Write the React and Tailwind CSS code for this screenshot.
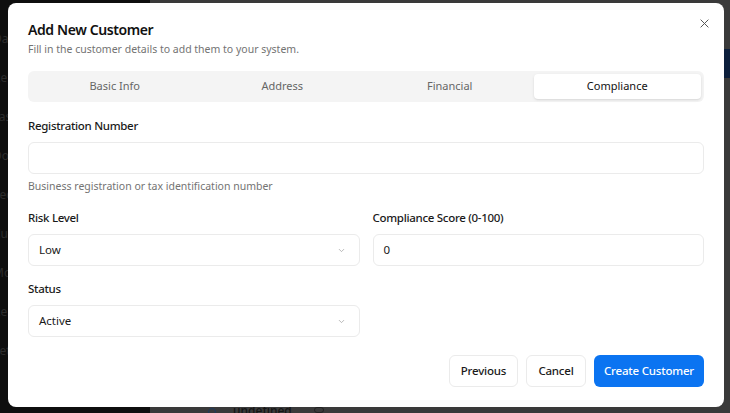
import React from 'react';

const cls = (...a) => a.filter(Boolean).join(' ');

const tabs = ['Basic Info', 'Address', 'Financial', 'Compliance'];

function Chevron() {
  return (
    <svg width="9" height="9" viewBox="0 0 24 24" fill="none" stroke="#a3a3a3" strokeWidth="2" strokeLinecap="round" strokeLinejoin="round">
      <path d="m6 9 6 6 6-6" />
    </svg>
  );
}

function Label({ children, className = '' }) {
  return <div className={cls('text-[11.5px] leading-[16px] font-medium tracking-[-0.3px] text-[#1a1a1a]', className)}>{children}</div>;
}

function Field({ children, select }) {
  return (
    <div className="h-[32px] mt-2 rounded-md border border-[#ebebeb] bg-white flex items-center justify-between pl-[10px] pr-[13px] text-[11.5px] text-[#1a1a1a]">
      <span>{children}</span>
      {select && <Chevron />}
    </div>
  );
}

function Button({ children, primary, className = '' }) {
  return (
    <button className={cls(
      'h-[32px] rounded-md text-[11.5px] font-medium tracking-[-0.2px]',
      primary ? 'bg-[#0b74f1] text-white' : 'bg-white text-[#1a1a1a] border border-[#ebebeb]',
      className
    )}>{children}</button>
  );
}

// dimmed page that sits behind the dialog
function Backdrop() {
  const items = ['Dashboard', 'Reports', 'Tasks', 'Documents', 'Secure', 'Customers', 'Monitoring', 'Reports', 'Settings'];
  return (
    <div className="flex h-full">
      <div className="w-[150px] bg-[#0e0e0e] pt-[31px] flex flex-col gap-[23px] text-[12px] leading-[16px] text-[#2c2c2c]">
        {items.map((t, i) => <div key={i} className="-ml-[7px]">{t}</div>)}
      </div>
      <div className="flex-1 bg-[#3a3a3a] flex flex-col">
        <div className="h-[49px]" />
        <div className="flex justify-end">
          <div className="w-[20px] h-[29px] bg-[#0d1f3c]" />
        </div>
        <div className="flex-1" />
        <div className="h-[6px] flex items-start pl-[58px] text-[12px] leading-[12px] text-[#151515] font-medium">
          <span className="mt-[1px] w-[8px] h-[8px] rounded-full border border-[#1e3a5f]" />
          <span className="ml-[17px] -mt-[2px]">undefined</span>
          <span className="ml-[22px] w-[10px] h-[6px] rounded-sm border border-[#222]" />
        </div>
      </div>
    </div>
  );
}

export default function App() {
  return (
    <div className="relative w-[730px] h-[413px] overflow-hidden" style={{ fontFamily: '"Segoe UI", "Noto Sans", sans-serif' }}>
      <Backdrop />
      <div className="absolute left-[8px] top-[3px] w-[716px] h-[404px] bg-white rounded-lg px-5 pt-[18px]">
        <button className="absolute right-[12px] top-[12px] w-4 h-4 flex items-center justify-center">
          <svg width="9" height="9" viewBox="0 0 10 10" stroke="#555" strokeWidth="1.1" strokeLinecap="round">
            <path d="M1 1l8 8M9 1l-8 8" />
          </svg>
        </button>
        <div className="text-[14px] leading-[18px] font-semibold tracking-[-0.4px] text-[#111]">Add New Customer</div>
        <div className="mt-[3px] text-[10.5px] leading-[14px] text-[#737373]">Fill in the customer details to add them to your system.</div>

        <div className="mt-[15px] h-[31px] rounded-md bg-[#f4f4f4] p-[3px] grid grid-cols-4">
          {tabs.map(t => (
            <div key={t} className={cls(
              'flex items-center justify-center rounded text-[11px]',
              t === 'Compliance' ? 'bg-white text-[#111] shadow-sm' : 'text-[#666]'
            )}>{t}</div>
          ))}
        </div>

        <Label className="mt-4">Registration Number</Label>
        <Field />
        <div className="mt-1 text-[10.5px] leading-[16px] text-[#737373]">Business registration or tax identification number</div>

        <div className="mt-4 grid grid-cols-2 gap-x-[13px]">
          <div>
            <Label>Risk Level</Label>
            <Field select>Low</Field>
          </div>
          <div>
            <Label>Compliance Score (0-100)</Label>
            <Field>0</Field>
          </div>
          <div className="mt-[15px]">
            <Label>Status</Label>
            <Field select>Active</Field>
          </div>
        </div>

        <div className="mt-[18px] flex justify-end gap-2">
          <Button className="w-[69px]">Previous</Button>
          <Button className="w-[60px]">Cancel</Button>
          <Button primary className="w-[110px]">Create Customer</Button>
        </div>
      </div>
    </div>
  );
}
